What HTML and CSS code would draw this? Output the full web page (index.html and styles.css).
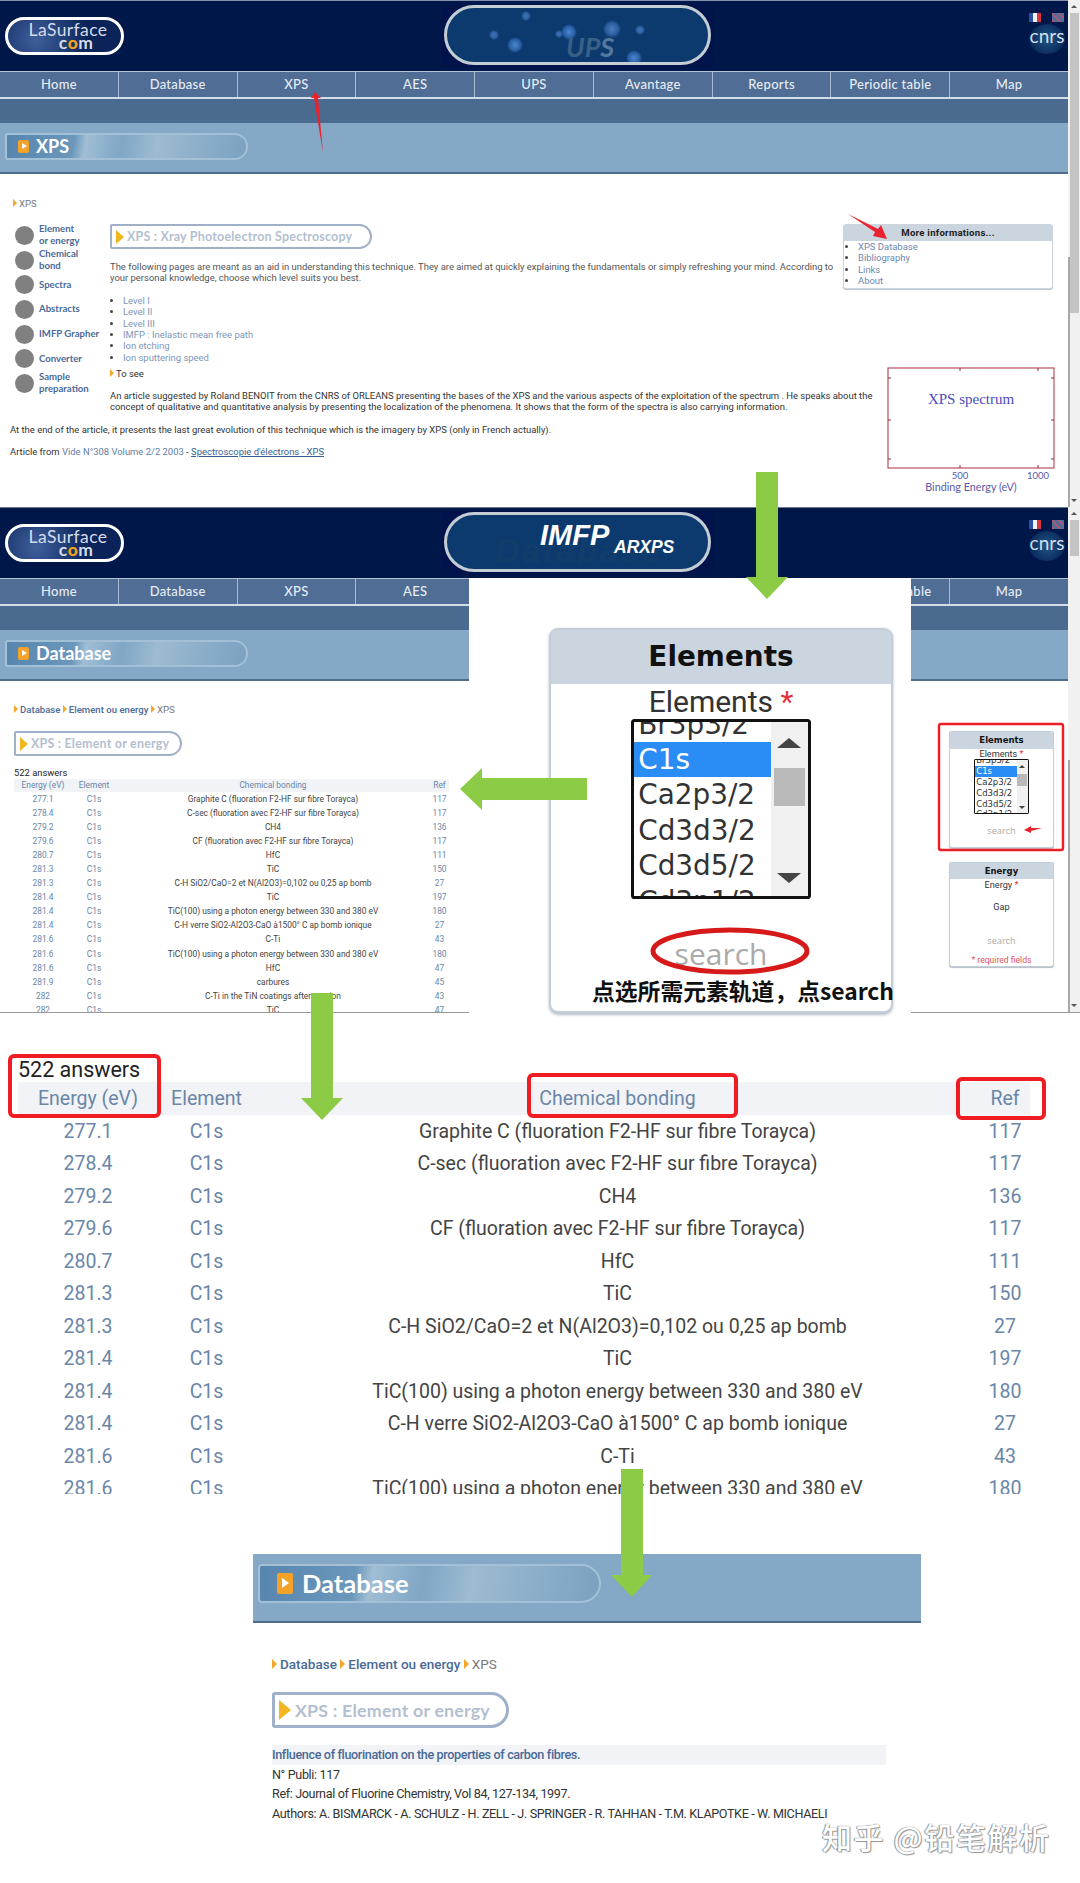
FILE: index.html
```html
<!DOCTYPE html>
<html lang="en">
<head>
  <meta charset="UTF-8" />
  <title>LaSurface XPS database guide</title>
  <link rel="stylesheet" href="styles.css">
</head>
<body>
<div class="page">

  <!-- first screenshot: XPS page -->
  <section class="screen screen-xps">
    <div class="screen-main">
      <header class="site-head">
        <div class="logo"><span>LaSurface</span><span class="logo-com">c<b>o</b>m</span></div>
        <div class="banner">
          <div class="banner-pill banner-ups"><span class="ups-text">UP<i>S</i></span></div>
        </div>
        <div class="head-right">
          <div class="flags"><span class="flag flag-fr"></span><span class="flag flag-uk"></span></div>
          <div class="cnrs">cnrs</div>
        </div>
      </header>
      <nav class="main-nav">
        <a>Home</a><a>Database</a><a>XPS</a><a>AES</a><a>UPS</a><a>Avantage</a><a>Reports</a><a>Periodic table</a><a>Map</a>
      </nav>
      <div class="sub-band"></div>
      <div class="title-band">
        <div class="title-pill"><span class="play"></span>XPS</div>
      </div>

      <div class="content">
        <div class="crumb crumb-first"><span class="tri"></span><span class="crumb-here">XPS</span></div>
        <div class="top-row">
          <ul class="sidenav">
            <li><span class="dot"></span><a>Element<br>or energy</a></li>
            <li><span class="dot"></span><a>Chemical<br>bond</a></li>
            <li><span class="dot"></span><a>Spectra</a></li>
            <li><span class="dot"></span><a>Abstracts</a></li>
            <li><span class="dot"></span><a>IMFP Grapher</a></li>
            <li><span class="dot"></span><a>Converter</a></li>
            <li><span class="dot"></span><a>Sample<br>preparation</a></li>
          </ul>
          <div class="main-col">
            <div class="more">
              <div class="more-head">More informations...</div>
              <ul>
                <li><a>XPS Database</a></li>
                <li><a>Bibliography</a></li>
                <li><a>Links</a></li>
                <li><a>About</a></li>
              </ul>
            </div>
            <div class="sub-pill sub-pill-wide"><span class="sub-tri"></span>XPS : Xray Photoelectron Spectroscopy</div>
            <p class="intro">The following pages are meant as an aid in understanding this technique. They are aimed at quickly explaining the fundamentals or simply refreshing your mind. According to<br>your personal knowledge, choose which level suits you best.</p>
            <ul class="levels">
              <li><a>Level I</a></li>
              <li><a>Level II</a></li>
              <li><a>Level III</a></li>
              <li><a>IMFP : Inelastic mean free path</a></li>
              <li><a>Ion etching</a></li>
              <li><a>Ion sputtering speed</a></li>
            </ul>
            <svg class="spectrum" width="168" height="126" viewBox="0 0 168 126">
              <rect x="1" y="1" width="166" height="100" fill="#fff" stroke="#b9505f" stroke-width="1.2"/>
              <path d="M73 1v3M151 1v3M1 11h3M167 11h-3M1 53h3M167 53h-3M1 92h3M167 92h-3M73 101v-3M151 101v-3" stroke="#8a3040" fill="none"/>
              <text x="84" y="37" text-anchor="middle" class="spectrum-title">XPS spectrum</text>
              <text x="73" y="112" text-anchor="middle" class="spectrum-label">500</text>
              <text x="151" y="112" text-anchor="middle" class="spectrum-label">1000</text>
              <text x="84" y="124" text-anchor="middle" class="spectrum-label spectrum-axis">Binding Energy (eV)</text>
            </svg>
            <div class="to-see"><span class="tri"></span>To see</div>
            <p class="article">An article suggested by Roland BENOIT from the CNRS of ORLEANS presenting the bases of the XPS and the various aspects of the exploitation of the spectrum . He speaks about the<br>concept of qualitative and quantitative analysis by presenting the localization of the phenomena. It shows that the form of the spectra is also carrying information.</p>
          </div>
        </div>
        <p class="article">At the end of the article, it presents the last great evolution of this technique which is the imagery by XPS (only in French actually).</p>
        <p class="article article-from">Article from <a class="link-soft">Vide N°308 Volume 2/2 2003</a> - <a class="link-line">Spectroscopie d'électrons - XPS</a></p>
      </div>
    </div>
    <div class="scrollbar scrollbar-xps">
      <span class="sb-up"></span>
      <span class="sb-thumb sb-thumb-long"></span>
      <span class="sb-track"></span>
      <span class="sb-down"></span>
    </div>
  </section>

  <!-- second screenshot: element search and results -->
  <section class="screen screen-db">
    <div class="screen-main">
      <header class="site-head">
        <div class="logo"><span>LaSurface</span><span class="logo-com">c<b>o</b>m</span></div>
        <div class="banner">
          <div class="banner-pill">
            <span class="ghost-text">Database</span>
            <span class="imfp-text">IMFP</span>
            <span class="arxps-text">ARXPS</span>
          </div>
        </div>
        <div class="head-right">
          <div class="flags"><span class="flag flag-fr"></span><span class="flag flag-uk"></span></div>
          <div class="cnrs">cnrs</div>
        </div>
      </header>
      <nav class="main-nav">
        <a>Home</a><a>Database</a><a>XPS</a><a>AES</a><a>UPS</a><a>Avantage</a><a>Reports</a><a>Periodic table</a><a>Map</a>
      </nav>
      <div class="sub-band"></div>
      <div class="title-band">
        <div class="title-pill"><span class="play"></span>Database</div>
      </div>

      <div class="content content-db">
        <div class="crumb crumb-db">
          <span class="tri"></span><a>Database</a>
          <span class="tri"></span><a>Element ou energy</a>
          <span class="tri"></span><span class="crumb-here">XPS</span>
        </div>
        <div class="db-row">
          <div class="db-left">
            <div class="sub-pill sub-pill-el"><span class="sub-tri"></span>XPS : Element or energy</div>
            <div class="answers answers-small">522 answers</div>
            <table class="results results-small">
              <thead><tr><th>Energy (eV)</th><th>Element</th><th>Chemical bonding</th><th>Ref</th></tr></thead>
              <tbody>
                <tr><td>277.1</td><td>C1s</td><td>Graphite C (fluoration F2-HF sur fibre Torayca)</td><td>117</td></tr>
                <tr><td>278.4</td><td>C1s</td><td>C-sec (fluoration avec F2-HF sur fibre Torayca)</td><td>117</td></tr>
                <tr><td>279.2</td><td>C1s</td><td>CH4</td><td>136</td></tr>
                <tr><td>279.6</td><td>C1s</td><td>CF (fluoration avec F2-HF sur fibre Torayca)</td><td>117</td></tr>
                <tr><td>280.7</td><td>C1s</td><td>HfC</td><td>111</td></tr>
                <tr><td>281.3</td><td>C1s</td><td>TiC</td><td>150</td></tr>
                <tr><td>281.3</td><td>C1s</td><td>C-H SiO2/CaO=2 et N(Al2O3)=0,102 ou 0,25 ap bomb</td><td>27</td></tr>
                <tr><td>281.4</td><td>C1s</td><td>TiC</td><td>197</td></tr>
                <tr><td>281.4</td><td>C1s</td><td>TiC(100) using a photon energy between 330 and 380 eV</td><td>180</td></tr>
                <tr><td>281.4</td><td>C1s</td><td>C-H verre SiO2-Al2O3-CaO à1500° C ap bomb ionique</td><td>27</td></tr>
                <tr><td>281.6</td><td>C1s</td><td>C-Ti</td><td>43</td></tr>
                <tr><td>281.6</td><td>C1s</td><td>TiC(100) using a photon energy between 330 and 380 eV</td><td>180</td></tr>
                <tr><td>281.6</td><td>C1s</td><td>HfC</td><td>47</td></tr>
                <tr><td>281.9</td><td>C1s</td><td>carbures</td><td>45</td></tr>
                <tr><td>282</td><td>C1s</td><td>C-Ti in the TiN coatings after erosion</td><td>43</td></tr>
                <tr><td>282</td><td>C1s</td><td>TiC</td><td>47</td></tr>
              </tbody>
            </table>
          </div>
          <div class="db-right">
            <div class="form-box">
              <div class="form-head">Elements</div>
              <div class="form-label">Elements <span class="req">*</span></div>
              <div class="listbox">
                <div class="options">
                  <div>Br3p3/2</div>
                  <div class="sel">C1s</div>
                  <div>Ca2p3/2</div>
                  <div>Cd3d3/2</div>
                  <div>Cd3d5/2</div>
                  <div>Cd3p1/2</div>
                </div>
                <div class="list-scroll"><span class="ls-up"></span><span class="ls-thumb"></span><span class="ls-down"></span></div>
              </div>
              <div class="form-search">search</div>
            </div>
            <div class="form-box form-energy">
              <div class="form-head">Energy</div>
              <div class="form-label">Energy <span class="req">*</span></div>
              <div class="form-label form-gap">Gap</div>
              <div class="form-search">search</div>
              <div class="req-note">* required fields</div>
            </div>
          </div>
        </div>
      </div>
    </div>
    <div class="scrollbar scrollbar-db">
      <span class="sb-up"></span>
      <span class="sb-thumb sb-thumb-short"></span>
      <span class="sb-track"></span>
      <span class="sb-down"></span>
    </div>
  </section>

  <!-- enlarged results table -->
  <section class="table-crop">
    <div class="answers">522 answers</div>
    <table class="results">
      <thead><tr><th>Energy (eV)</th><th>Element</th><th>Chemical bonding</th><th>Ref</th></tr></thead>
      <tbody>
        <tr><td>277.1</td><td>C1s</td><td>Graphite C (fluoration F2-HF sur fibre Torayca)</td><td>117</td></tr>
        <tr><td>278.4</td><td>C1s</td><td>C-sec (fluoration avec F2-HF sur fibre Torayca)</td><td>117</td></tr>
        <tr><td>279.2</td><td>C1s</td><td>CH4</td><td>136</td></tr>
        <tr><td>279.6</td><td>C1s</td><td>CF (fluoration avec F2-HF sur fibre Torayca)</td><td>117</td></tr>
        <tr><td>280.7</td><td>C1s</td><td>HfC</td><td>111</td></tr>
        <tr><td>281.3</td><td>C1s</td><td>TiC</td><td>150</td></tr>
        <tr><td>281.3</td><td>C1s</td><td>C-H SiO2/CaO=2 et N(Al2O3)=0,102 ou 0,25 ap bomb</td><td>27</td></tr>
        <tr><td>281.4</td><td>C1s</td><td>TiC</td><td>197</td></tr>
        <tr><td>281.4</td><td>C1s</td><td>TiC(100) using a photon energy between 330 and 380 eV</td><td>180</td></tr>
        <tr><td>281.4</td><td>C1s</td><td>C-H verre SiO2-Al2O3-CaO à1500° C ap bomb ionique</td><td>27</td></tr>
        <tr><td>281.6</td><td>C1s</td><td>C-Ti</td><td>43</td></tr>
        <tr><td>281.6</td><td>C1s</td><td>TiC(100) using a photon energy between 330 and 380 eV</td><td>180</td></tr>
      </tbody>
    </table>
  </section>

  <!-- enlarged publication detail -->
  <section class="detail">
    <div class="title-band title-band-lg">
      <div class="title-pill title-pill-lg"><span class="play"></span>Database</div>
    </div>
    <div class="detail-body">
      <div class="crumb crumb-lg">
        <span class="tri"></span><a>Database</a>
        <span class="tri"></span><a>Element ou energy</a>
        <span class="tri"></span><span class="crumb-here">XPS</span>
      </div>
      <div class="sub-pill sub-pill-lg"><span class="sub-tri"></span>XPS : Element or energy</div>
      <div class="pub-title">Influence of fluorination on the properties of carbon fibres.</div>
      <div class="pub-line">N° Publi: 117</div>
      <div class="pub-line">Ref: Journal of Fluorine Chemistry, Vol 84, 127-134, 1997.</div>
      <div class="pub-line">Authors: A. BISMARCK - A. SCHULZ - H. ZELL - J. SPRINGER - R. TAHHAN - T.M. KLAPOTKE - W. MICHAELI</div>
    </div>
  </section>

  <!-- zoomed Elements form laid over the second screenshot -->
  <div class="zoom-mask">
    <div class="form-box form-big">
      <div class="form-head">Elements</div>
      <div class="form-label">Elements <span class="req">*</span></div>
      <div class="listbox">
        <div class="options">
          <div>Br3p3/2</div>
          <div class="sel">C1s</div>
          <div>Ca2p3/2</div>
          <div>Cd3d3/2</div>
          <div>Cd3d5/2</div>
          <div>Cd3p1/2</div>
        </div>
        <div class="list-scroll"><span class="ls-up"></span><span class="ls-thumb"></span><span class="ls-down"></span></div>
      </div>
      <div class="form-search">search</div>
      <div class="form-note">点选所需元素轨道，点search</div>
    </div>
  </div>

  <!-- annotations drawn over the screenshots -->
  <svg class="marks" width="1080" height="1883" viewBox="0 0 1080 1883">
    <g fill="#8ccb45">
      <polygon points="756,472 778,472 778,577 788,577 767,599 746,577 756,577"/>
      <polygon points="587,778 482,778 482,768 460,789 482,810 482,800 587,800"/>
      <polygon points="311,993 333,993 333,1098 343,1098 322,1120 301,1098 311,1098"/>
      <polygon points="621,1469 643,1469 643,1575 652,1575 632,1597 611,1575 621,1575"/>
    </g>
    <g fill="#e8222e">
      <polygon points="315,92 321,98 318,98 323,153 314,98 311,98"/>
      <polygon points="848,214 878,229 881,225 887,239 873,236 875,232"/>
      <polygon points="1024,830 1031,826 1031,828 1042,828 1031,831 1031,833"/>
    </g>
    <g fill="none" stroke="#f01c24" stroke-width="4">
      <rect x="939" y="724" width="124" height="126" rx="2" stroke-width="2.4"/>
      <rect x="10" y="1056" width="149" height="60" rx="4"/>
      <rect x="529" y="1075" width="207" height="41" rx="4"/>
      <rect x="958" y="1079" width="86" height="39" rx="4"/>
    </g>
    <ellipse cx="730" cy="951" rx="77" ry="21" fill="none" stroke="#d61a1a" stroke-width="5"/>
  </svg>

  <div class="watermark">知乎 @铅笔解析</div>
</div>
</body>
</html>
```

FILE: styles.css
```css
* { box-sizing: border-box; }

html, body {
  margin: 0;
  padding: 0;
  background: #fff;
}

body {
  font-family: Roboto, "Liberation Sans", sans-serif;
  color: #444;
}

.page {
  position: relative;
  width: 1080px;
  height: 1883px;
  overflow: hidden;
}

ul { margin: 0; padding: 0; }
p { margin: 0; }

/* screens */
.screen {
  display: flex;
  width: 1080px;
  overflow: hidden;
}

.screen-xps { height: 507px; }

.screen-db {
  height: 506px;
  border-bottom: 1px solid #999;
  margin-bottom: 2px;
}

.screen-main {
  width: 1068px;
  flex: none;
}

.scrollbar {
  position: relative;
  width: 12px;
  flex: none;
  display: flex;
  flex-direction: column;
  align-items: center;
  background: #f1f1f1;
}

.scrollbar::before {
  content: "";
  position: absolute;
  left: 0;
  bottom: 0;
  width: 1.5px;
  background: #a8a8a8;
}

.scrollbar-xps::before { top: 257px; }
.scrollbar-db::before { top: 253px; }

.sb-up, .sb-down {
  width: 0;
  height: 0;
  margin: 5px 0;
  border-left: 3px solid transparent;
  border-right: 3px solid transparent;
}

.sb-up { border-bottom: 3px solid #555; }
.sb-down { border-top: 3px solid #555; }

.sb-thumb {
  width: 9px;
  background: #c4c4c4;
}

.sb-thumb-long { height: 300px; }
.sb-thumb-short { height: 36px; }
.sb-track { flex: 1; }

/* header */
.site-head {
  display: flex;
  align-items: flex-start;
  height: 71px;
  background: #00174a;
  border-top: 1px solid #8492ad;
}

.screen-db .site-head { border-top-color: #6d788c; }

.logo {
  width: 119px;
  height: 38px;
  margin: 16px 0 0 5px;
  display: flex;
  flex-direction: column;
  align-items: center;
  padding: 3px 0 0 7px;
  border: 3px solid #fff;
  border-radius: 19px;
  background: radial-gradient(circle at 28px 20px, #3f5f9c, #0a2358 60%);
  color: #d5dcea;
  font: 17.5px/13px Lato, sans-serif;
  letter-spacing: .4px;
}

.logo-com {
  margin-left: 16px;
  font-weight: 700;
}

.logo-com b { color: #f3a21c; }

.banner {
  width: 272px;
  height: 64px;
  margin: 3px 0 0 317px;
  padding: 1px 2px 3px 3px;
  background: #00134b;
}

.banner-pill {
  position: relative;
  height: 60px;
  border: 3px solid #c4ccd4;
  border-radius: 30px;
  background: #0c3a6e;
  overflow: hidden;
}

.banner-ups {
  background:
    radial-gradient(circle 5px at 79px 8px, #3f78bd, #2a5c9c 70%, transparent),
    radial-gradient(circle 5px at 47px 27px, #3f78bd, #2a5c9c 70%, transparent),
    radial-gradient(circle 8px at 68px 37px, #4a86d0, #2a5fa4 70%, transparent),
    radial-gradient(circle 4px at 112px 26px, #3f78bd, #2a5c9c 70%, transparent),
    radial-gradient(circle 8px at 122px 24px, #4a86d0, #2a5fa4 70%, transparent),
    radial-gradient(circle 9px at 165px 21px, #4a7fc0, #2a5c9c 70%, transparent),
    radial-gradient(circle 5px at 193px 22px, #3f78bd, #2a5c9c 70%, transparent),
    radial-gradient(circle 8px at 187px 50px, #4a86d0, #2a5fa4 70%, transparent),
    #0c3a6e;
}

.ups-text {
  position: absolute;
  left: 119px;
  top: 24px;
  font: italic 700 27px/30px Lato, sans-serif;
  color: #3a6088;
}

.ups-text i { color: #54789e; }

.imfp-text {
  position: absolute;
  left: 93px;
  top: 4px;
  font: italic 700 29px/32px "Liberation Sans", sans-serif;
  color: #fff;
}

.arxps-text {
  position: absolute;
  left: 167px;
  top: 21px;
  font: italic 700 17.5px/22px "Liberation Sans", sans-serif;
  color: #fff;
}

.ghost-text {
  position: absolute;
  left: 48px;
  top: 17px;
  font: italic 700 34px/36px "Liberation Sans", sans-serif;
  color: #123d6b;
  letter-spacing: 2px;
}

.head-right {
  margin-left: auto;
  width: 38px;
  margin-right: 2px;
}

.flags {
  display: flex;
  justify-content: space-between;
  padding: 12px 2px 0 1px;
  height: 23px;
}

.flag {
  width: 12px;
  height: 9px;
}

.flag-fr { background: linear-gradient(90deg, #2a4fa0 33%, #eef2f6 33%, #eef2f6 66%, #d8323c 66%); }
.flag-uk { background: repeating-linear-gradient(45deg, #b5566a 0 2px, #5a6a98 2px 5px); }

.cnrs {
  width: 36px;
  height: 30px;
  margin-left: 1px;
  border-radius: 50%;
  background: radial-gradient(circle, #1f5884, #0d2e60 65%, #00174a);
  color: #d3deea;
  font: 19px/24px Lato, sans-serif;
  text-align: center;
}

/* nav */
.main-nav {
  display: flex;
  height: 28px;
  background: #4f6d95;
  border-top: 1px solid #b4c3d5;
  border-bottom: 2px solid #d3dee9;
}

.main-nav a {
  flex: 1;
  text-align: center;
  color: #e6ecf3;
  font: 500 13px/24px Lato, sans-serif;
  letter-spacing: .3px;
  border-right: 1px solid #a9bace;
}

.main-nav a:last-child { border-right: 0; }

.sub-band {
  height: 24px;
  background: #4a6a8f;
}

.title-band {
  height: 51px;
  padding: 10px 5px 0;
  background: #84a8c5;
  border-bottom: 2px solid #4d6c8e;
}

.title-pill {
  display: flex;
  align-items: center;
  width: 243px;
  height: 27px;
  padding-left: 11px;
  border: 2px solid #a4c0d6;
  border-radius: 3px 14px 14px 3px;
  background: linear-gradient(100deg, #5685ae 0, #6b97bb 28%, #a0bed5 33%, #7fa6c4 48%, #9dbbd2 62%, #7ba1c0 100%);
  color: #fff;
  font: 700 18px/23px Lato, sans-serif;
}

.play {
  position: relative;
  width: 11px;
  height: 13px;
  margin-right: 7px;
  background: #f5a229;
  border-radius: 2px;
}

.play::after {
  content: "";
  position: absolute;
  left: 4px;
  top: 3px;
  border-left: 5px solid #fff;
  border-top: 3.5px solid transparent;
  border-bottom: 3.5px solid transparent;
}

/* page text */
.content {
  padding: 24px 0 0 10px;
  font-size: 9.45px;
  line-height: 11.4px;
}

.crumb {
  font-size: 9.6px;
  line-height: 12px;
  margin-bottom: 14px;
}

.crumb-first { padding-left: 3px; }

.crumb a {
  color: #4a6a96;
  font-weight: 500;
}

.crumb-here { color: #777; }

.tri {
  display: inline-block;
  width: 0;
  height: 0;
  margin-right: 2px;
  border-left: 4px solid #f0a72a;
  border-top: 4px solid transparent;
  border-bottom: 4px solid transparent;
}

.top-row {
  display: flex;
  height: 200px;
}

.sidenav {
  width: 100px;
  flex: none;
  margin-top: -1px;
  padding-left: 5px;
  list-style: none;
}

.sidenav li {
  display: flex;
  align-items: center;
  height: 24.7px;
  color: #4a6a9a;
  font: 700 9.6px/12px Lato, sans-serif;
}

.dot {
  width: 19px;
  height: 19px;
  flex: none;
  margin-right: 5px;
  border-radius: 50%;
  background: #808080;
}

.main-col { flex: 1; }

.more {
  float: right;
  width: 210px;
  height: 65px;
  margin-right: 15px;
  border: 1px solid #cdd6df;
  border-radius: 3px;
  box-shadow: 0 1px 1px #bbc4cc;
  background: #fff;
}

.more-head {
  height: 16px;
  background: #cad5df;
  color: #222;
  font: 700 9.6px/16px Roboto, sans-serif;
  letter-spacing: .25px;
  text-align: center;
}

.more ul { padding-left: 14px; }
.more li a { color: #6b88ae; }

.spectrum {
  float: right;
  margin: 4px 13px 0 0;
}

.spectrum-title {
  font: 15px "Liberation Serif", serif;
  fill: #4a4cc0;
}

.spectrum-label {
  font: 9.5px Lato, sans-serif;
  fill: #5a5aa8;
}

.spectrum-axis { font-size: 10.8px; }

.sub-pill {
  display: flex;
  align-items: center;
  height: 26px;
  padding-left: 4px;
  border: 2px solid #9fb0c8;
  border-radius: 2px 13px 13px 2px;
  background: #fff;
  color: #b3bfd0;
  font: 700 12.5px/22px Lato, sans-serif;
  letter-spacing: .2px;
}

.sub-pill-wide {
  width: 262px;
  height: 25px;
  margin-bottom: 12px;
}

.sub-tri {
  width: 0;
  height: 0;
  margin-right: 3px;
  border-left: 8px solid #f2b71f;
  border-top: 7px solid transparent;
  border-bottom: 7px solid transparent;
}

.intro,
.levels,
.to-see,
.article { white-space: nowrap; }

.intro { color: #555; }

.levels {
  margin: 11px 0 0;
  padding-left: 13px;
  height: 68px;
}

.levels a { color: #7c96b8; }

.to-see {
  margin-top: 5px;
  height: 22px;
  color: #333;
}

.article { color: #333; }

.article-from { padding-top: 11px; }

.link-soft { color: #5f7ea6; }

.link-line {
  color: #3a5f92;
  text-decoration: underline;
}

/* database screen */
.content-db { padding: 23px 0 0 14px; }

.crumb-db { margin-bottom: 15px; }

.db-row {
  display: flex;
  justify-content: space-between;
  padding-right: 14px;
}

.db-left {
  width: 435px;
  height: 400px;
}

.sub-pill-el {
  width: 168px;
  height: 25px;
}

.answers {
  color: #222;
  font-size: 21.5px;
  line-height: 25px;
}

.answers-small {
  margin-top: 11px;
  font-size: 9.4px;
  line-height: 12px;
}

.results {
  border-collapse: collapse;
  table-layout: fixed;
  width: 1012px;
  font-size: 19.5px;
}

.results th {
  height: 33px;
  padding: 0;
  background: #f1f3f6;
  color: #6a86a8;
  font-weight: 400;
  text-align: center;
}

.results td {
  height: 32.5px;
  padding: 0;
  text-align: center;
  color: #444;
  white-space: nowrap;
}

.results td:first-child,
.results td:nth-child(2),
.results td:last-child { color: #6a86a8; }

.results th:nth-child(1) { width: 140px; }
.results th:nth-child(2) { width: 97px; }
.results th:nth-child(3) { width: 725px; }
.results th:nth-child(4) { width: 50px; }

.results-small {
  width: 435px;
  font-size: 8.4px;
}

.results-small th {
  height: 13px;
  line-height: 13px;
}

.results-small td {
  height: 14.05px;
  line-height: 14px;
}

.results-small th:nth-child(1) { width: 58px; }
.results-small th:nth-child(2) { width: 44px; }
.results-small th:nth-child(3) { width: 314px; }
.results-small th:nth-child(4) { width: 19px; }

.table-crop {
  height: 479px;
  padding: 42px 0 0 18px;
  overflow: hidden;
}

/* element form, sized in em so that the zoom copy scales */
.db-right {
  width: 105px;
  flex: none;
}

.form-box {
  position: relative;
  font-size: 9.15px;
  width: 11.47em;
  height: 12.75em;
  margin-bottom: 14px;
  border: 1px solid #c3ced8;
  border-radius: .3em;
  box-shadow: 0 .05em .1em #b4bec8;
  background: #fff;
  color: #333;
  text-align: center;
}

.form-head {
  background: #cad5df;
  color: #111;
  font-family: "DejaVu Sans", sans-serif;
  font-size: .93em;
  font-weight: 700;
  line-height: 1.97em;
  height: 1.94em;
  border-radius: .2em .2em 0 0;
}

.form-label {
  height: 1.2em;
  line-height: 1.2em;
}

.req { color: #e2323c; }

.listbox {
  display: flex;
  width: 6em;
  height: 6em;
  margin: -.04em auto 0;
  border: .1em solid #111;
  border-radius: .12em;
  overflow: hidden;
  background: #fff;
}

.options {
  width: 4.55em;
  flex: none;
  margin-top: -.51em;
  text-align: left;
  font-family: "DejaVu Sans", sans-serif;
}

.options div {
  height: 1.27em;
  padding-left: .15em;
  font-size: .93em;
  line-height: 1.27em;
}

.options .sel {
  background: #2a8cf5;
  color: #fff;
}

.list-scroll {
  flex: 1;
  display: flex;
  flex-direction: column;
  align-items: center;
  background: #f0f0f0;
}

.ls-up, .ls-down {
  width: 0;
  height: 0;
  border-left: .43em solid transparent;
  border-right: .43em solid transparent;
}

.ls-up {
  margin-top: .53em;
  border-bottom: .35em solid #444;
}

.ls-down {
  margin-top: 2.22em;
  border-top: .35em solid #444;
}

.ls-thumb {
  width: 1.05em;
  height: 1.28em;
  margin-top: .67em;
  background: #b9b9b9;
}

.form-search {
  margin-top: 1.22em;
  color: #aaa;
  font-family: "Open Sans", sans-serif;
  line-height: 1.2em;
}

.form-energy { height: 105px; }

.form-energy .form-head {
  height: 16px;
  line-height: 16px;
}

.form-energy .form-label {
  height: 12px;
  line-height: 12px;
}

.form-energy .form-gap { margin-top: 10px; }
.form-energy .form-search { margin-top: 22px; }

.req-note {
  margin-top: 9px;
  color: #e2525c;
  font-size: 8.6px;
  line-height: 11px;
}

/* zoomed form over the screenshot */
.zoom-mask {
  position: absolute;
  left: 469px;
  top: 578px;
  width: 442px;
  height: 437px;
  padding: 50px 0 0 80px;
  background: #fff;
}

.form-big {
  font-size: 30px;
  width: 344px;
  height: 385px;
  border-width: 2px;
}

.form-note {
  position: absolute;
  left: 41px;
  top: 346px;
  color: #111;
  font: 700 22.8px/30px "Noto Sans CJK SC", sans-serif;
  white-space: nowrap;
}

/* publication detail crop */
.detail {
  width: 668px;
  margin: 60px 0 0 253px;
}

.title-band-lg {
  height: 69px;
  padding: 10px 5px 0;
}

.title-pill-lg {
  width: 343px;
  height: 39px;
  padding-left: 17px;
  border-radius: 4px 20px 20px 4px;
  font-size: 25.5px;
}

.title-pill-lg .play {
  width: 16px;
  height: 21px;
  margin-right: 9px;
}

.title-pill-lg .play::after {
  left: 5px;
  top: 5px;
  border-left-width: 7px;
  border-top-width: 5.5px;
  border-bottom-width: 5.5px;
}

.detail-body {
  padding: 33px 0 0 19px;
  font-size: 12.6px;
  letter-spacing: -.36px;
  color: #333;
}

.crumb-lg {
  font-size: 13.5px;
  line-height: 16px;
  letter-spacing: 0;
  margin-bottom: 20px;
}

.crumb-lg .tri {
  border-left-width: 5px;
  border-top-width: 5px;
  border-bottom-width: 5px;
  margin-right: 3px;
}

.sub-pill-lg {
  width: 237px;
  height: 36px;
  margin-bottom: 17px;
  border-width: 3px;
  border-radius: 3px 18px 18px 3px;
  font-size: 17.8px;
  letter-spacing: .2px;
}

.sub-pill-lg .sub-tri {
  margin-right: 4px;
  border-left-width: 12px;
  border-top-width: 10px;
  border-bottom-width: 10px;
}

.pub-title {
  width: 614px;
  height: 19.5px;
  background: #f1f3f6;
  color: #4a6a96;
  font-weight: 500;
  line-height: 19.5px;
}

.pub-line {
  line-height: 19.7px;
  white-space: nowrap;
}

/* overlays */
.marks {
  position: absolute;
  left: 0;
  top: 0;
}

.watermark {
  position: absolute;
  left: 822px;
  top: 1816px;
  color: #fff;
  font: 500 30px/40px "Noto Sans CJK SC", sans-serif;
  letter-spacing: 1.6px;
  text-shadow: 0 0 1px #777, 1px 1px 1px #999, -1px 0 1px #999;
  white-space: nowrap;
}
```
